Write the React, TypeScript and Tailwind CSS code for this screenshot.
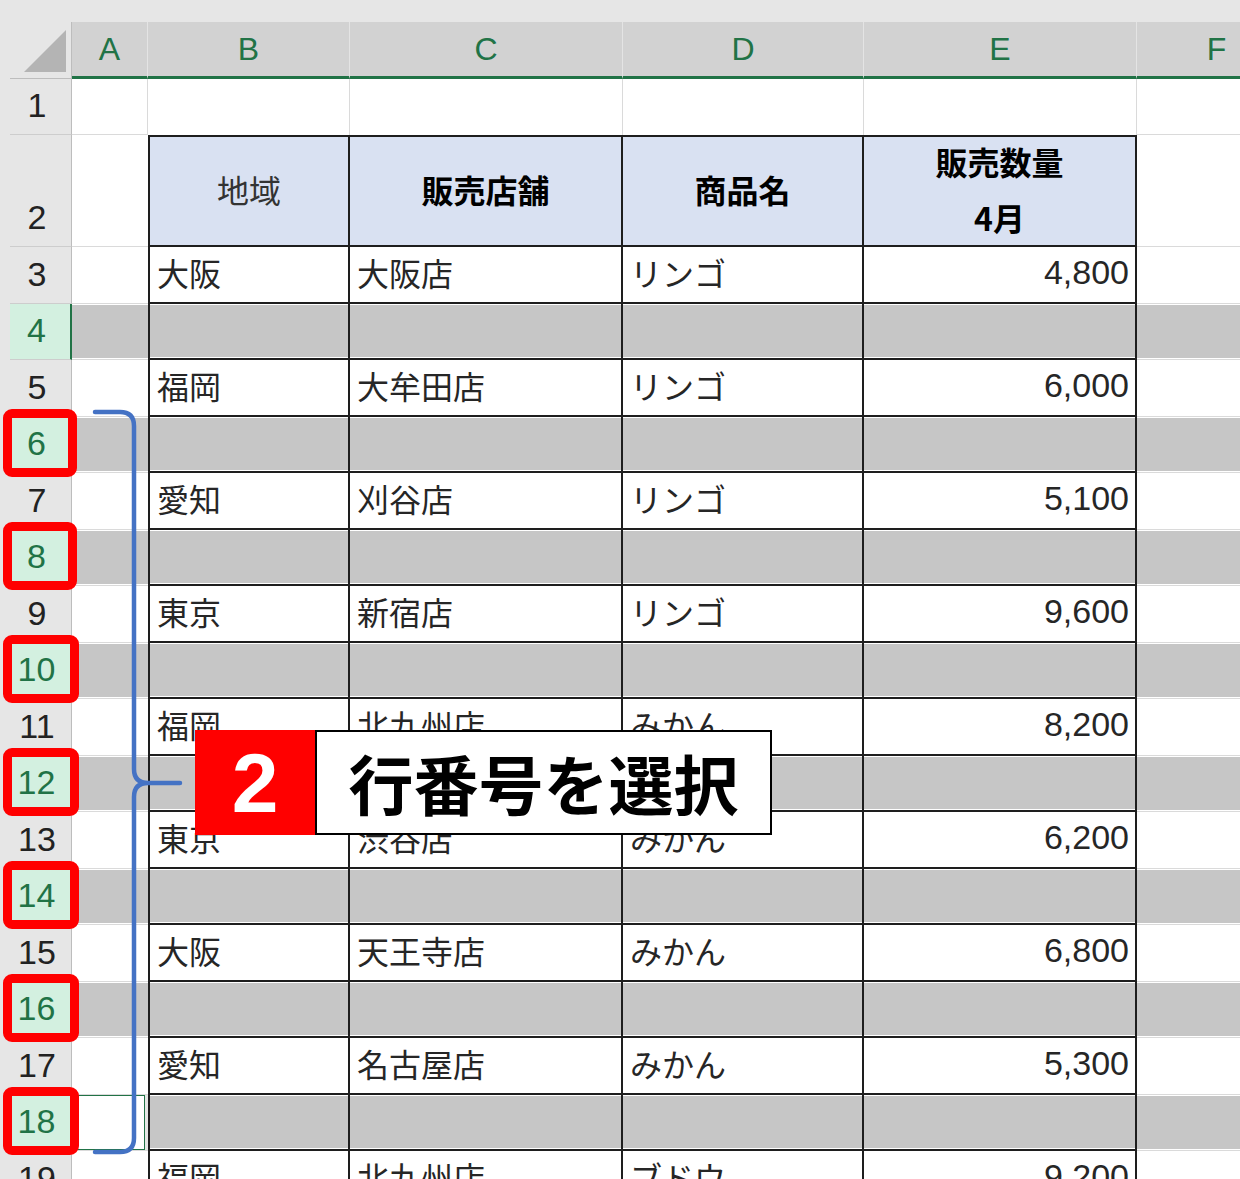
import React from 'react'

const JP = "font-['Noto_Sans_CJK_JP',sans-serif]"
const LAT = "font-['Liberation_Sans',Arial,sans-serif]"

type Data = [string, string, string, string]

// row number -> data; even rows 4..18 are the grey (empty) rows
const DATA: Record<number, Data> = {
  3: ['大阪', '大阪店', 'リンゴ', '4,800'],
  5: ['福岡', '大牟田店', 'リンゴ', '6,000'],
  7: ['愛知', '刈谷店', 'リンゴ', '5,100'],
  9: ['東京', '新宿店', 'リンゴ', '9,600'],
  11: ['福岡', '北九州店', 'みかん', '8,200'],
  13: ['東京', '渋谷店', 'みかん', '6,200'],
  15: ['大阪', '天王寺店', 'みかん', '6,800'],
  17: ['愛知', '名古屋店', 'みかん', '5,300'],
  19: ['福岡', '北九州店', 'ブドウ', '9,200'],
}

const COLS = ['A', 'B', 'C', 'D', 'E', 'F']
const ROWS = Array.from({ length: 19 }, (_, i) => i + 1)

function isGray(r: number) {
  return r >= 4 && r <= 18 && r % 2 === 0
}

function RowHead({ n }: { n: number }) {
  const sel = isGray(n)
  const boxed = sel && n >= 6
  return (
    <div
      className={`relative flex items-end justify-center pb-[7px] pr-[7px] leading-[44px] text-[34px] ${LAT} border-b border-b-[#cdcdcd] ${
        sel ? 'bg-[#d3f0e0] text-[#217346] border-r-2 border-r-[#217346]' : 'bg-[#e6e6e6] text-[#222] border-r border-r-[#bdbdbd]'
      }`}
    >
      {n}
      {boxed && (
        <div
          className={`absolute -left-[7px] -top-[8px] -bottom-[5px] z-20 rounded-[9px] border-[9px] border-[#ff0000] ${
            n >= 10 ? '-right-[9px]' : '-right-[7px]'
          }`}
        />
      )}
    </div>
  )
}

function GrayFill() {
  return <div className="h-full border-y border-white bg-[#c6c6c6]" />
}

function Cell({ r, c }: { r: number; c: number }) {
  // c: 1 = A ... 6 = F
  const inTable = c >= 2 && c <= 5 && r >= 2
  if (inTable) {
    const cls = `border-b-2 border-r-2 border-[#1e1e1e] ${c === 2 ? 'border-l-2' : ''} ${r === 2 ? 'border-t-2' : ''}`
    if (r === 2) {
      if (c === 5)
        return (
          <div className={`${cls} bg-[#d9e1f2] flex flex-col items-center justify-center pb-[4px] ${JP} font-bold text-[32px] text-black leading-[56px]`}>
            <span>販売数量</span>
            <span>4月</span>
          </div>
        )
      const label = ['地域', '販売店舗', '商品名'][c - 2]
      return (
        <div className={`${cls} bg-[#d9e1f2] flex items-center justify-center pb-[5px] ${JP} text-[32px] ${c === 2 ? 'text-[#333]' : 'font-bold text-black'}`}>
          {label}
        </div>
      )
    }
    if (isGray(r)) return <div className={cls}><GrayFill /></div>
    const d = DATA[r]
    if (c === 5)
      return (
        <div className={`${cls} bg-white flex items-center justify-end pr-[6px] pb-[3px] ${LAT} text-[34px] text-[#262626]`}>{d[3]}</div>
      )
    return (
      <div className={`${cls} bg-white flex items-center pl-[7px] pb-[4px] ${JP} text-[32px] text-[#262626]`}>{d[c - 2]}</div>
    )
  }

  // plain sheet cells (column A, F, row 1)
  const noRight = c === 1 && r >= 2
  const noBottom = r === 1 && c >= 2 && c <= 5
  const cls = `${noRight ? '' : 'border-r border-r-[#dadada]'} ${noBottom ? '' : 'border-b border-b-[#dadada]'}`
  if (c === 1 && r === 18)
    return (
      <div className={cls}>
        <div className="h-full mr-[3px] border border-[#217346] bg-white" />
      </div>
    )
  if (isGray(r)) return <div className={cls}><GrayFill /></div>
  return <div className={`${cls} bg-white`} />
}

export default function App() {
  return (
    <div className="relative w-[1240px] h-[1179px] overflow-hidden bg-[#e6e6e6] pt-[22px] pl-[10px]">
      <div className="grid grid-cols-[62px_76px_202px_273px_241px_273px_160px] grid-rows-[57px_56px_112px_repeat(17,56.5px)]">
        {/* corner */}
        <div className="relative bg-[#e6e6e6] border-r border-b border-[#bdbdbd]">
          <svg className="absolute left-0 top-0" width="62" height="56" viewBox="0 0 62 56">
            <polygon points="14,50 56,50 56,8" fill="#b4b4b4" />
          </svg>
        </div>
        {COLS.map(l => (
          <div
            key={l}
            className={`flex items-center justify-center bg-[#d2d2d2] border-b-[3px] border-b-[#217346] border-r border-r-[#e4e4e4] ${LAT} text-[32px] text-[#217346]`}
          >
            {l}
          </div>
        ))}

        {ROWS.map(r => (
          <React.Fragment key={r}>
            <RowHead n={r} />
            {[1, 2, 3, 4, 5, 6].map(c => (
              <Cell key={c} r={r} c={c} />
            ))}
          </React.Fragment>
        ))}
      </div>

      {/* blue brace */}
      <svg className="absolute left-[88px] top-[405px] z-30" width="100" height="755" viewBox="0 0 100 755" fill="none">
        <path
          d="M7 7 L32 7 Q46 7 46 21 L46 364 Q46 378 60 378 L92 378 M60 378 Q46 378 46 392 L46 733 Q46 747 32 747 L7 747"
          stroke="#4472c4"
          strokeWidth="4.5"
          strokeLinecap="round"
        />
      </svg>

      {/* callout */}
      <div className="absolute left-[195px] top-[730px] z-30 flex h-[105px]">
        <div className={`w-[120px] bg-[#ff0000] flex items-center justify-center text-white font-bold text-[84px] ${LAT}`}>2</div>
        <div className={`w-[457px] bg-white border-2 border-black flex items-center justify-center ${JP} font-bold text-[65px] text-black`}>
          行番号を選択
        </div>
      </div>
    </div>
  )
}
